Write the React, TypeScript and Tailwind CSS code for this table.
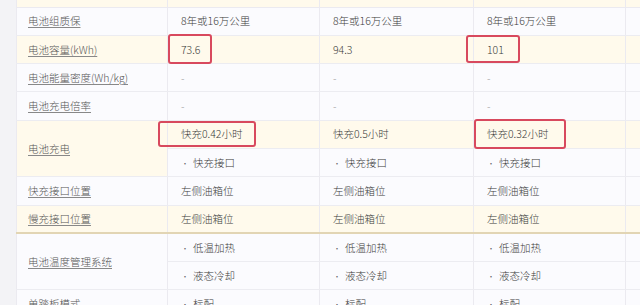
import React from 'react'

type Row = {
  label: string
  cells: string[][]
  cream?: boolean[]
  labelCream?: boolean
  boxes?: { row: number; col: number; cls: string }[]
  heavy?: boolean
}

const rows: Row[] = [
  { label: '电池组质保', cells: [['8年或16万公里', '8年或16万公里', '8年或16万公里']] },
  {
    label: '电池容量(kWh)',
    cells: [['73.6', '94.3', '101']],
    cream: [true],
    labelCream: true,
    boxes: [
      { row: 0, col: 0, cls: 'left-0 top-[-2px] w-[44px] h-[30px]' },
      { row: 0, col: 2, cls: 'left-[-8px] top-[-1px] w-[54px] h-[28px]' },
    ],
  },
  { label: '电池能量密度(Wh/kg)', cells: [['-', '-', '-']] },
  { label: '电池充电倍率', cells: [['-', '-', '-']] },
  {
    label: '电池充电',
    cells: [
      ['快充0.42小时', '快充0.5小时', '快充0.32小时'],
      ['• 快充接口', '• 快充接口', '• 快充接口'],
    ],
    cream: [true, false],
    labelCream: true,
    boxes: [
      { row: 0, col: 0, cls: 'left-[-10px] top-0 w-[98px] h-[26px]' },
      { row: 0, col: 2, cls: 'left-0 top-[-2px] w-[92px] h-[30px]' },
    ],
  },
  { label: '快充接口位置', cells: [['左侧油箱位', '左侧油箱位', '左侧油箱位']] },
  {
    label: '慢充接口位置',
    cells: [['左侧油箱位', '左侧油箱位', '左侧油箱位']],
    cream: [true],
    labelCream: true,
    heavy: true,
  },
  {
    label: '电池温度管理系统',
    cells: [
      ['• 低温加热', '• 低温加热', '• 低温加热'],
      ['• 液态冷却', '• 液态冷却', '• 液态冷却'],
    ],
  },
  { label: '单踏板模式', cells: [['• 标配', '• 标配', '• 标配']] },
]

const white = 'bg-[#fbfbfe]'
const cream = 'bg-[#fffaec]'

export default function App() {
  return (
    <div
      className="flex h-[305px] w-[640px] overflow-hidden bg-[#f3f3f6] text-[10.5px] font-light text-[#3a3a3a]"
      style={{ fontFamily: '"Noto Sans CJK SC", "Noto Sans", sans-serif' }}
    >
      <div className="w-[16px] shrink-0" />
      <table className="w-[700px] shrink-0 table-fixed border-collapse">
        <colgroup>
          <col className="w-[151px]" />
          <col className="w-[152px]" />
          <col className="w-[154px]" />
          <col className="w-[152px]" />
          <col className="w-[91px]" />
        </colgroup>
        <tbody>
          {/* partial row cut off at the top */}
          <tr className="h-[7px]">
            {[0, 1, 2, 3, 4].map((i) => (
              <td key={i} className={`${cream} border-x border-b border-[#ebeaf0] p-0`} />
            ))}
          </tr>
          {rows.map((r) =>
            r.cells.map((line, li) => {
              const isCream = r.cream?.[li] ?? false
              const last = li === r.cells.length - 1
              const bottom = last && r.heavy ? 'border-b-2 border-b-[#e2d5b4]' : 'border-b border-b-[#ececf1]'
              return (
                <tr key={r.label + li} className="h-[28.3px]">
                  {li === 0 && (
                    <td
                      rowSpan={r.cells.length}
                      className={`${r.labelCream ? cream : white} border-x border-x-[#ebeaf0] ${
                        r.heavy ? 'border-b-2 border-b-[#e2d5b4]' : 'border-b border-b-[#ececf1]'
                      } pl-[11px] align-middle`}
                    >
                      <span className="text-[#555] underline decoration-[#888] underline-offset-2">{r.label}</span>
                    </td>
                  )}
                  {line.map((v, ci) => {
                    const box = r.boxes?.find((b) => b.row === li && b.col === ci)
                    return (
                      <td
                        key={ci}
                        className={`relative ${isCream ? cream : white} border-x border-x-[#ebeaf0] ${bottom} pl-[13px] align-middle whitespace-nowrap ${
                          v === '-' ? 'text-[#999]' : ''
                        }`}
                      >
                        {v.startsWith('• ') ? (
                          <span>
                            <span className="mr-[4px] text-[8px] text-[#666]">•</span>
                            {v.slice(2)}
                          </span>
                        ) : (
                          v
                        )}
                        {box && (
                          <span
                            className={`absolute ${box.cls} rounded-[3px] border-2 border-[#d8495e]`}
                          />
                        )}
                      </td>
                    )
                  })}
                  <td className={`${isCream ? cream : white} border-x border-x-[#ebeaf0] ${bottom}`} />
                </tr>
              )
            })
          )}
        </tbody>
      </table>
    </div>
  )
}
